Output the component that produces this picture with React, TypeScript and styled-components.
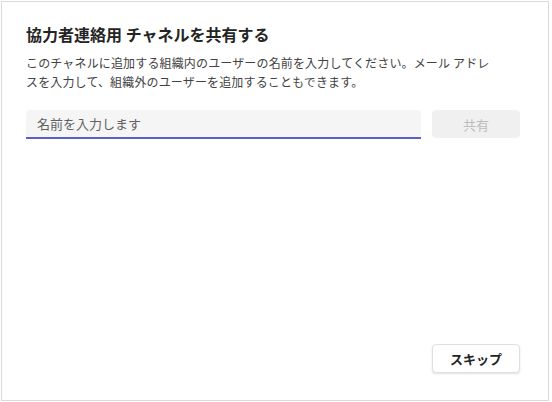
import React from 'react';
import styled, { createGlobalStyle } from 'styled-components';

const GlobalStyle = createGlobalStyle`
  html, body {
    margin: 0;
    padding: 0;
    background: #ffffff;
  }
  body {
    font-family: "Noto Sans CJK JP", "Noto Sans", sans-serif;
    color: #242424;
  }
  * {
    box-sizing: border-box;
  }
`;

export default function App() {
  return (
    <>
      <GlobalStyle />
      <Dialog>
        <Title>協力者連絡用 チャネルを共有する</Title>
        <Description>
          このチャネルに追加する組織内のユーザーの名前を入力してください。メール アドレスを入力して、組織外のユーザーを追加することもできます。
        </Description>
        <InputRow>
          <NameInput type="text" placeholder="名前を入力します" />
          <ShareButton type="button" disabled>
            共有
          </ShareButton>
        </InputRow>
        <Footer>
          <SkipButton type="button">スキップ</SkipButton>
        </Footer>
      </Dialog>
    </>
  );
}

const Dialog = styled.div`
  display: flex;
  flex-direction: column;
  width: 548px;
  height: 400px;
  margin: 1px 0 0 1px;
  padding: 21px 28px 27px 24px;
  border: 1px solid #d9d9d9;
  background: #ffffff;
`;

const Title = styled.h1`
  margin: 0;
  font-size: 16px;
  line-height: 22px;
  font-weight: 700;
  color: #242424;
`;

const Description = styled.p`
  max-width: 472px;
  margin: 8px 0 0;
  font-size: 12px;
  line-height: 19px;
  letter-spacing: 0.15px;
  color: #424242;
`;

const InputRow = styled.div`
  display: flex;
  gap: 11px;
  margin-top: 19px;
`;

const NameInput = styled.input`
  flex: 1;
  height: 29px;
  padding: 0 11px;
  border: none;
  border-bottom: 2px solid #5b5fc7;
  border-radius: 4px 4px 0 0;
  background: #f5f5f5;
  font-family: inherit;
  font-size: 13px;
  color: #242424;
  outline: none;

  &::placeholder {
    color: #616161;
  }
`;

const ShareButton = styled.button`
  width: 88px;
  height: 28px;
  border: none;
  border-radius: 4px;
  background: #f0f0f0;
  font-family: inherit;
  font-size: 13px;
  color: #bdbdbd;
  cursor: default;
`;

const Footer = styled.div`
  display: flex;
  justify-content: flex-end;
  margin-top: auto;
`;

const SkipButton = styled.button`
  width: 88px;
  height: 29px;
  border: 1px solid #e0e0e0;
  border-radius: 4px;
  background: #ffffff;
  box-shadow: 0 1px 2px rgba(0, 0, 0, 0.12);
  font-family: inherit;
  font-size: 13px;
  font-weight: 700;
  color: #242424;
  cursor: pointer;
`;
